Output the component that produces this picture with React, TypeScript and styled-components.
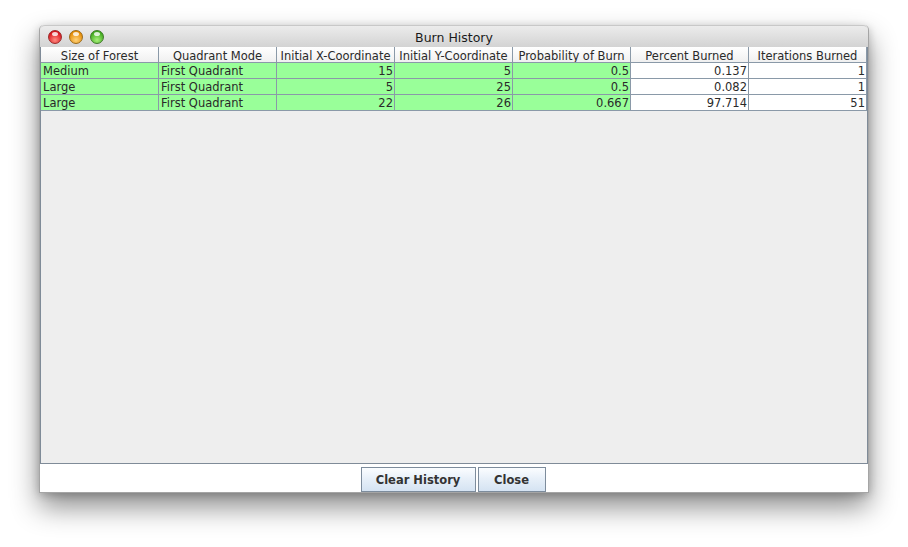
import React from "react";
import styled, { createGlobalStyle } from "styled-components";

const Global = createGlobalStyle`
  html, body { margin: 0; padding: 0; background: #ffffff; }
  body { font-family: "DejaVu Sans", "Liberation Sans", sans-serif; }
`;

const Page = styled.div`
  width: 908px;
  height: 547px;
  padding: 25px 0 0 39px;
  box-sizing: border-box;
  overflow: hidden;
`;

const Window = styled.div`
  width: 830px;
  height: 468px;
  box-sizing: border-box;
  display: flex;
  flex-direction: column;
  background: #ffffff;
  border: 1px solid #a5a5a5;
  border-top: none;
  border-radius: 5px 5px 0 0;
  box-shadow: 0 14px 28px rgba(0, 0, 0, 0.45), 0 2px 8px rgba(0, 0, 0, 0.2);
`;

const TitleBar = styled.div`
  height: 22px;
  flex: none;
  position: relative;
  display: flex;
  align-items: center;
  justify-content: center;
  background: linear-gradient(#ececec, #d3d3d3);
  border-radius: 5px 5px 0 0;
  border-top: 1px solid #c8c8c8;
  box-sizing: border-box;
  font-size: 12.5px;
  padding-top: 1px;
  color: #1a1a1a;
`;

const Lights = styled.div`
  position: absolute;
  left: 8px;
  top: 4px;
  display: flex;
  gap: 7px;
`;

const Light = styled.span<{ $c1: string; $c2: string; $b: string }>`
  width: 14px;
  height: 14px;
  border-radius: 50%;
  box-sizing: border-box;
  border: 1px solid ${(p) => p.$b};
  background: radial-gradient(circle at 50% 75%, ${(p) => p.$c1} 0%, ${(p) => p.$c2} 75%);
  position: relative;
  &::after {
    content: "";
    position: absolute;
    left: 3px;
    top: 1px;
    width: 6px;
    height: 4px;
    border-radius: 50%;
    background: rgba(255, 255, 255, 0.8);
  }
`;

const ScrollPane = styled.div`
  flex: 1;
  background: #eeeeee;
  border: 1px solid #7f8b98;
  border-top: none;
  overflow: hidden;
`;

const Row = styled.div`
  display: grid;
  grid-template-columns: repeat(7, 118px);
`;

const HeaderCell = styled.div`
  height: 16px;
  box-sizing: border-box;
  border-right: 1px solid #8a99a8;
  border-bottom: 1px solid #8a99a8;
  background: linear-gradient(#ffffff, #f0f0f0);
  font-size: 11.5px;
  line-height: 18px;
  text-align: center;
  color: #2a2a2a;
  white-space: nowrap;
  overflow: hidden;
`;

const Cell = styled.div<{ $green: boolean; $right: boolean }>`
  height: 16px;
  box-sizing: border-box;
  border-right: 1px solid #8a99a8;
  border-bottom: 1px solid #8a99a8;
  background: ${(p) => (p.$green ? "#99ff99" : "#ffffff")};
  font-size: 11.5px;
  line-height: 17px;
  padding: 0 1px 0 2px;
  text-align: ${(p) => (p.$right ? "right" : "left")};
  color: #2a2a2a;
  white-space: nowrap;
  overflow: hidden;
`;

const ButtonBar = styled.div`
  height: 28px;
  flex: none;
  display: flex;
  justify-content: center;
  align-items: flex-start;
  gap: 2px;
  padding-top: 3px;
  padding-right: 2px;
  box-sizing: border-box;
  background: #ffffff;
`;

const Button = styled.button<{ $w: number }>`
  width: ${(p) => p.$w}px;
  height: 25px;
  box-sizing: border-box;
  border: 1px solid #7d8c9c;
  background: linear-gradient(#fbfdff 0%, #e8f0f9 45%, #d5e3f2 100%);
  font-family: "DejaVu Sans", "Liberation Sans", sans-serif;
  font-weight: bold;
  font-size: 11.5px;
  color: #333333;
  padding: 0;
`;

const headers = [
  "Size of Forest",
  "Quadrant Mode",
  "Initial X-Coordinate",
  "Initial Y-Coordinate",
  "Probability of Burn",
  "Percent Burned",
  "Iterations Burned",
];

const rows = [
  ["Medium", "First Quadrant", "15", "5", "0.5", "0.137", "1"],
  ["Large", "First Quadrant", "5", "25", "0.5", "0.082", "1"],
  ["Large", "First Quadrant", "22", "26", "0.667", "97.714", "51"],
];

export default function App() {
  return (
    <Page>
      <Global />
      <Window>
        <TitleBar>
          <Lights>
            <Light $c1="#ff8a80" $c2="#d9121a" $b="#9a2a2a" />
            <Light $c1="#ffd27a" $c2="#e58a00" $b="#9a6a1a" />
            <Light $c1="#a8f07a" $c2="#3ea81c" $b="#3f7a2a" />
          </Lights>
          Burn History
        </TitleBar>
        <ScrollPane>
          <Row>
            {headers.map((h) => (
              <HeaderCell key={h}>{h}</HeaderCell>
            ))}
          </Row>
          {rows.map((r, i) => (
            <Row key={i}>
              {r.map((v, j) => (
                <Cell key={j} $green={j < 5} $right={j >= 2}>
                  {v}
                </Cell>
              ))}
            </Row>
          ))}
        </ScrollPane>
        <ButtonBar>
          <Button $w={115}>Clear History</Button>
          <Button $w={68}>Close</Button>
        </ButtonBar>
      </Window>
    </Page>
  );
}
